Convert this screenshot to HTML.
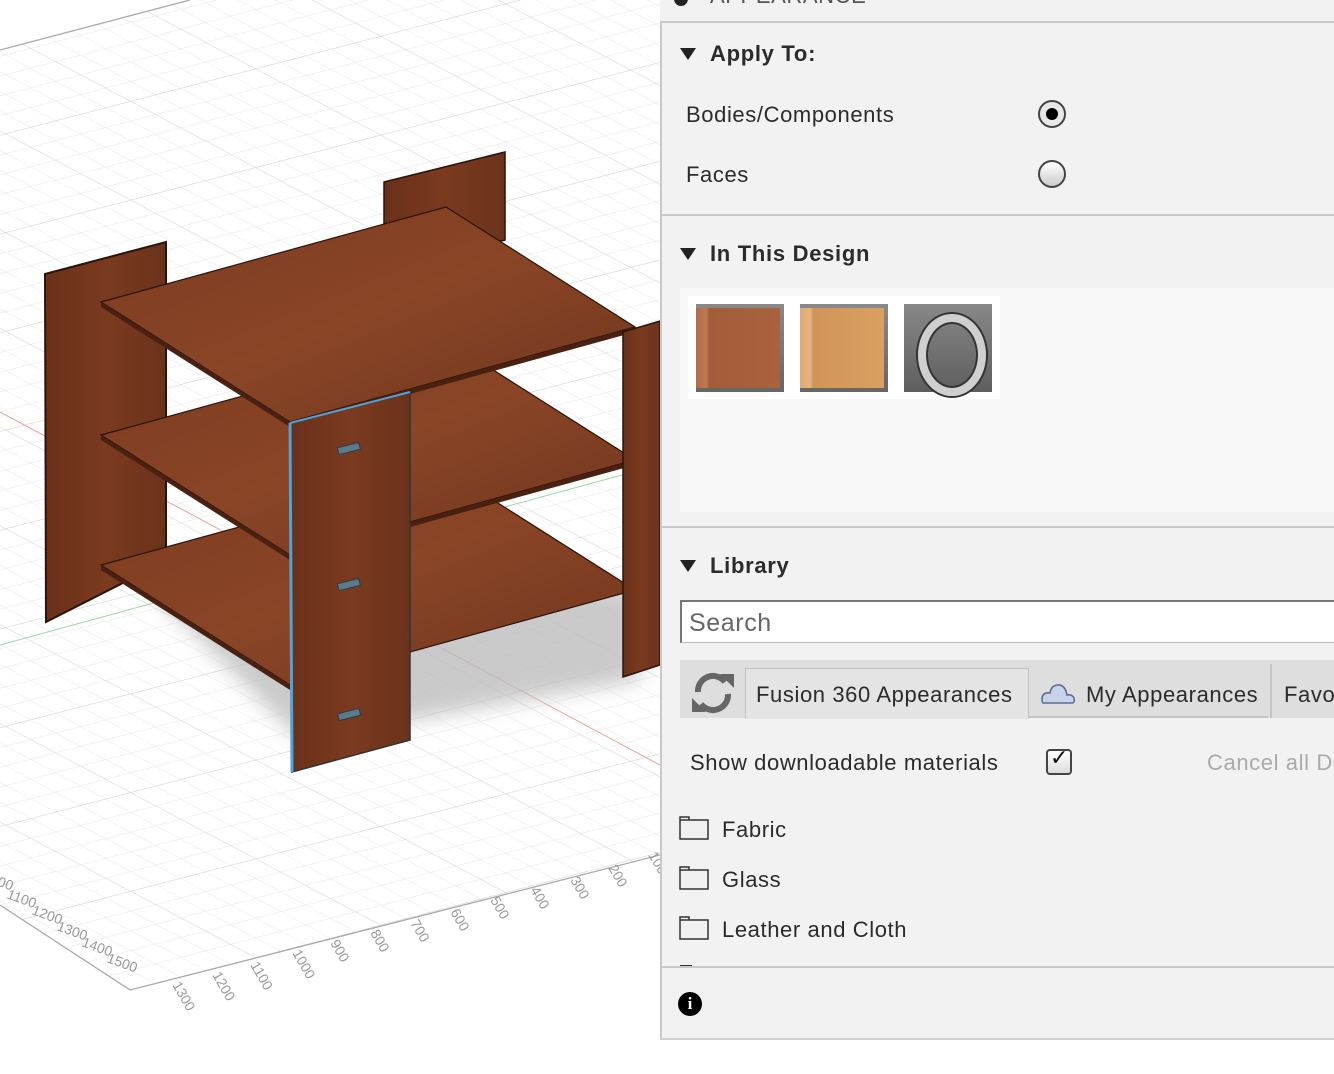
<!DOCTYPE html>
<html><head><meta charset="utf-8"><style>
html,body{margin:0;padding:0;width:1334px;height:1074px;overflow:hidden;background:#fff;font-family:"Liberation Sans",sans-serif;}
#panel{position:absolute;left:660px;top:0;width:674px;height:1038px;background:#f2f2f2;border-bottom:2px solid #cfcfcf;overflow:hidden;}
.abs{position:absolute;}
.t{position:absolute;color:#2b2b2b;font-size:22px;white-space:nowrap;letter-spacing:0.6px;}
.h{font-weight:bold;font-size:22px;color:#2b2b2b;letter-spacing:0.7px;}
.tri{position:absolute;width:0;height:0;border-left:8px solid transparent;border-right:8px solid transparent;border-top:12px solid #222;}
.hr{position:absolute;left:2px;right:0;height:2px;background:#c9c9c9;}
.fold{position:absolute;width:30px;height:24px;}
</style></head><body>
<svg class="abs" style="left:0;top:0" width="660" height="1074" viewBox="0 0 660 1074">
<defs>
<pattern id="g" width="25" height="25" patternUnits="userSpaceOnUse" patternTransform="matrix(1,0.53,1,-0.26,130,990)">
<path d="M0 0H25M0 0V25" stroke="#e4e4e4" stroke-width="1.2" fill="none"/>
</pattern>
<pattern id="g2" width="125" height="125" patternUnits="userSpaceOnUse" patternTransform="matrix(1,0.53,1,-0.26,130,990)">
<path d="M0 0H125M0 0V125" stroke="#d2d2d2" stroke-width="1.2" fill="none"/>
</pattern>
<clipPath id="c"><polygon points="0,50 190,0 660,0 660,855 130,990 0,905"/></clipPath>
<filter id="bl"><feGaussianBlur stdDeviation="10"/></filter>
<linearGradient id="wd" x1="0" y1="0" x2="1" y2="1"><stop offset="0" stop-color="#7c3a1f"/><stop offset="0.5" stop-color="#8a4527"/><stop offset="1" stop-color="#6f341b"/></linearGradient>
<linearGradient id="wp" x1="0" y1="0" x2="1" y2="0"><stop offset="0" stop-color="#6a301a"/><stop offset="0.5" stop-color="#7a3a1f"/><stop offset="1" stop-color="#6b321b"/></linearGradient>
<linearGradient id="fg" x1="0" y1="0" x2="0" y2="1"><stop offset="0" stop-color="#fff"/><stop offset="1" stop-color="#ddd"/></linearGradient>
</defs>
<g clip-path="url(#c)">
<rect width="660" height="1074" fill="url(#g)"/>
<rect width="660" height="1074" fill="url(#g2)"/>
</g>
<path d="M0 50L190 0M130 990L660 855M130 990L0 905" stroke="#aaa" stroke-width="1.3" fill="none"/>
<line x1="0" y1="412" x2="660" y2="765" stroke="#f0a0a0" stroke-width="1"/>
<line x1="0" y1="645" x2="640" y2="470" stroke="#9fd49f" stroke-width="1"/>
<g fill="#999" font-size="14" font-family="Liberation Sans">
<text transform="translate(-18,880) rotate(20)">1000</text>
<text transform="translate(6,898) rotate(20)">1100</text>
<text transform="translate(31,914) rotate(20)">1200</text>
<text transform="translate(56,930) rotate(20)">1300</text>
<text transform="translate(81,946) rotate(20)">1400</text>
<text transform="translate(106,962) rotate(20)">1500</text>
<text transform="translate(172,985) rotate(60)">1300</text>
<text transform="translate(212,975) rotate(60)">1200</text>
<text transform="translate(250,965) rotate(60)">1100</text>
<text transform="translate(292,953) rotate(60)">1000</text>
<text transform="translate(330,943) rotate(60)">900</text>
<text transform="translate(370,933) rotate(60)">800</text>
<text transform="translate(410,923) rotate(60)">700</text>
<text transform="translate(450,912) rotate(60)">600</text>
<text transform="translate(490,900) rotate(60)">500</text>
<text transform="translate(530,890) rotate(60)">400</text>
<text transform="translate(570,880) rotate(60)">300</text>
<text transform="translate(608,868) rotate(60)">200</text>
<text transform="translate(648,855) rotate(60)">100</text>
</g>
<polygon points="150,590 300,560 640,590 640,680 300,740" fill="#bdbdbd" filter="url(#bl)" opacity="0.8"/>
<polygon points="384,182 505,152 505,240 384,270" fill="url(#wp)" stroke="#2a140a" stroke-width="1.5"/>
<polygon points="45,274 166,242 166,561 46,622" fill="url(#wp)" stroke="#2a140a" stroke-width="2"/>
<polygon points="101,565 446,470 635,590 290,685" fill="url(#wd)" stroke="#2a140a" stroke-width="1.2"/>
<polygon points="101,565 290,685 290,690 101,570" fill="#4a2010"/>
<polygon points="101,435 446,340 635,460 290,555" fill="url(#wd)" stroke="#2a140a" stroke-width="1.2"/>
<polygon points="101,435 290,555 290,560 101,440" fill="#4a2010"/>
<polygon points="290,555 635,460 635,465 290,560" fill="#4a2010"/>
<polygon points="101,302 446,207 635,327 290,422" fill="url(#wd)" stroke="#2a140a" stroke-width="1.2"/>
<polygon points="101,302 290,422 290,427 101,307" fill="#4a2010"/>
<polygon points="290,422 635,327 635,332 290,427" fill="#4a2010"/>
<polygon points="623,332 660,321 660,665 623,677" fill="url(#wp)" stroke="#2a140a" stroke-width="1.5"/>
<polygon points="290,423 410,392 410,740 292,772" fill="url(#wp)" stroke="#333" stroke-width="1.5"/>
<line x1="290" y1="423" x2="292" y2="772" stroke="#4fa3d6" stroke-width="3"/>
<line x1="290" y1="423" x2="410" y2="392" stroke="#4fa3d6" stroke-width="2"/>
<g fill="#5b7a8a" stroke="#2c3d48" stroke-width="1"><rect x="338" y="445" width="22" height="7" transform="rotate(-14 349 449)"/><rect x="338" y="581" width="22" height="7" transform="rotate(-14 349 585)"/><rect x="338" y="711" width="22" height="7" transform="rotate(-14 349 714)"/></g>
</svg>

<div id="panel">
  <div class="abs" style="left:14px;top:-8px;width:14px;height:14px;border-radius:7px;background:#222"></div>
  <div class="t" style="left:50px;top:-17px;color:#555;font-size:22px">APPEARANCE</div>
  <div class="hr" style="top:21px;left:0"></div>
  <div class="abs" style="left:0;top:22px;width:2px;height:1016px;background:#c9c9c9"></div>

  <div class="tri" style="left:20px;top:48px"></div>
  <div class="t h" style="left:50px;top:41px">Apply To:</div>
  <div class="t" style="left:26px;top:102px">Bodies/Components</div>
  <div class="abs" style="left:378px;top:100px;width:24px;height:24px;border-radius:50%;border:2px solid #444;background:#e8e8e8"></div>
  <div class="abs" style="left:386px;top:108px;width:12px;height:12px;border-radius:50%;background:#000"></div>
  <div class="t" style="left:26px;top:162px">Faces</div>
  <div class="abs" style="left:378px;top:160px;width:24px;height:24px;border-radius:50%;border:2px solid #444;background:linear-gradient(#fff,#ccc)"></div>
  <div class="hr" style="top:214px"></div>

  <div class="tri" style="left:20px;top:248px"></div>
  <div class="t h" style="left:50px;top:241px">In This Design</div>
  <div class="abs" style="left:20px;top:288px;width:654px;height:224px;background:#f8f8f8"></div>
  <div class="abs" style="left:28px;top:296px;width:312px;height:103px;background:#fff"></div>
  <div class="abs" style="left:36px;top:304px;width:88px;height:88px;background:linear-gradient(#8a8a8a,#666)"><div style="position:absolute;left:0;top:4px;width:84px;height:80px;background:linear-gradient(90deg,#b06a44,#c07a52 12%,#a45d3a 16%,#a9623e)"></div></div>
  <div class="abs" style="left:140px;top:304px;width:88px;height:88px;background:linear-gradient(#8a8a8a,#666)"><div style="position:absolute;left:0;top:4px;width:84px;height:80px;background:linear-gradient(90deg,#e0a872,#e8b47e 12%,#d29458 16%,#d9a062)"></div></div>
  <div class="abs" style="left:244px;top:304px;width:88px;height:88px;background:linear-gradient(#888,#5e5e5e)"><div style="position:absolute;left:14px;top:10px;width:52px;height:66px;border-radius:50%;border:8px solid #cfcfcf;box-shadow:0 0 0 2px #333 inset,0 0 0 2px #333"></div></div>
  <div class="hr" style="top:526px"></div>

  <div class="tri" style="left:20px;top:560px"></div>
  <div class="t h" style="left:50px;top:553px">Library</div>
  <div class="abs" style="left:20px;top:600px;width:660px;height:40px;background:#fff;border-top:2px solid #777;border-left:2px solid #777;border-bottom:1px solid #bbb"></div>
  <div class="t" style="left:29px;top:609px;font-size:25px;color:#666">Search</div>

  <div class="abs" style="left:20px;top:660px;width:660px;height:58px;background:#dedede"></div>
  <svg class="abs" style="left:30px;top:670px" width="46" height="46" viewBox="0 0 46 46"><path d="M8 22A15 15 0 0 1 35 12" stroke="#666" stroke-width="6" fill="none"/><polygon points="30,4 44,4 44,18" fill="#666"/><path d="M38 24A15 15 0 0 1 11 34" stroke="#666" stroke-width="6" fill="none"/><polygon points="2,28 16,42 2,42" fill="#666"/></svg>
  <div class="abs" style="left:85px;top:668px;width:282px;height:50px;background:#e4e4e4;border:1px solid #c2c2c2;border-bottom:none"></div>
  <div class="t" style="left:96px;top:682px">Fusion 360 Appearances</div>
  <svg class="abs" style="left:380px;top:680px" width="36" height="26" viewBox="0 0 36 26"><path d="M3 23H32Q35 23 34 18Q32 14 27 15Q25 4 17 5Q11 6 10 13Q3 12 2 18Q2 23 3 23Z" fill="#c8d2e8" stroke="#5d6f99" stroke-width="1.6"/></svg>
  <div class="t" style="left:426px;top:682px">My Appearances</div>
  <div class="abs" style="left:610px;top:664px;width:2px;height:54px;background:#c4c4c4"></div>
  <div class="abs" style="left:368px;top:716px;width:240px;height:2px;background:#c4c4c4"></div>
  <div class="t" style="left:624px;top:682px">Favorites</div>

  <div class="t" style="left:30px;top:750px">Show downloadable materials</div>
  <div class="abs" style="left:386px;top:749px;width:22px;height:22px;border:2px solid #444;border-radius:4px;background:linear-gradient(#fff,#ddd)"></div>
  <div class="t" style="left:390px;top:745px;font-size:22px;color:#111">✓</div>
  <div class="t" style="left:547px;top:750px;color:#aaa">Cancel all Downloads</div>

  <svg class="fold" style="left:19px;top:816px" viewBox="0 0 30 24"><path d="M1 4H10V1H1ZM1 4V23H29V4Z" fill="#f0f0f0" stroke="#333" stroke-width="1.5"/></svg>
  <div class="t" style="left:62px;top:817px">Fabric</div>
  <svg class="fold" style="left:19px;top:866px" viewBox="0 0 30 24"><path d="M1 4H10V1H1ZM1 4V23H29V4Z" fill="#f0f0f0" stroke="#333" stroke-width="1.5"/></svg>
  <div class="t" style="left:62px;top:867px">Glass</div>
  <svg class="fold" style="left:19px;top:916px" viewBox="0 0 30 24"><path d="M1 4H10V1H1ZM1 4V23H29V4Z" fill="#f0f0f0" stroke="#333" stroke-width="1.5"/></svg>
  <div class="t" style="left:62px;top:917px">Leather and Cloth</div>
  <div class="abs" style="left:20px;top:965px;width:12px;height:2px;background:#333"></div>
  <div class="hr" style="top:966px"></div>
  <div class="abs" style="left:18px;top:992px;width:24px;height:24px;border-radius:50%;background:#000;color:#fff;font:bold 17px 'Liberation Serif',serif;text-align:center;line-height:24px">i</div>
</div>
</body></html>
